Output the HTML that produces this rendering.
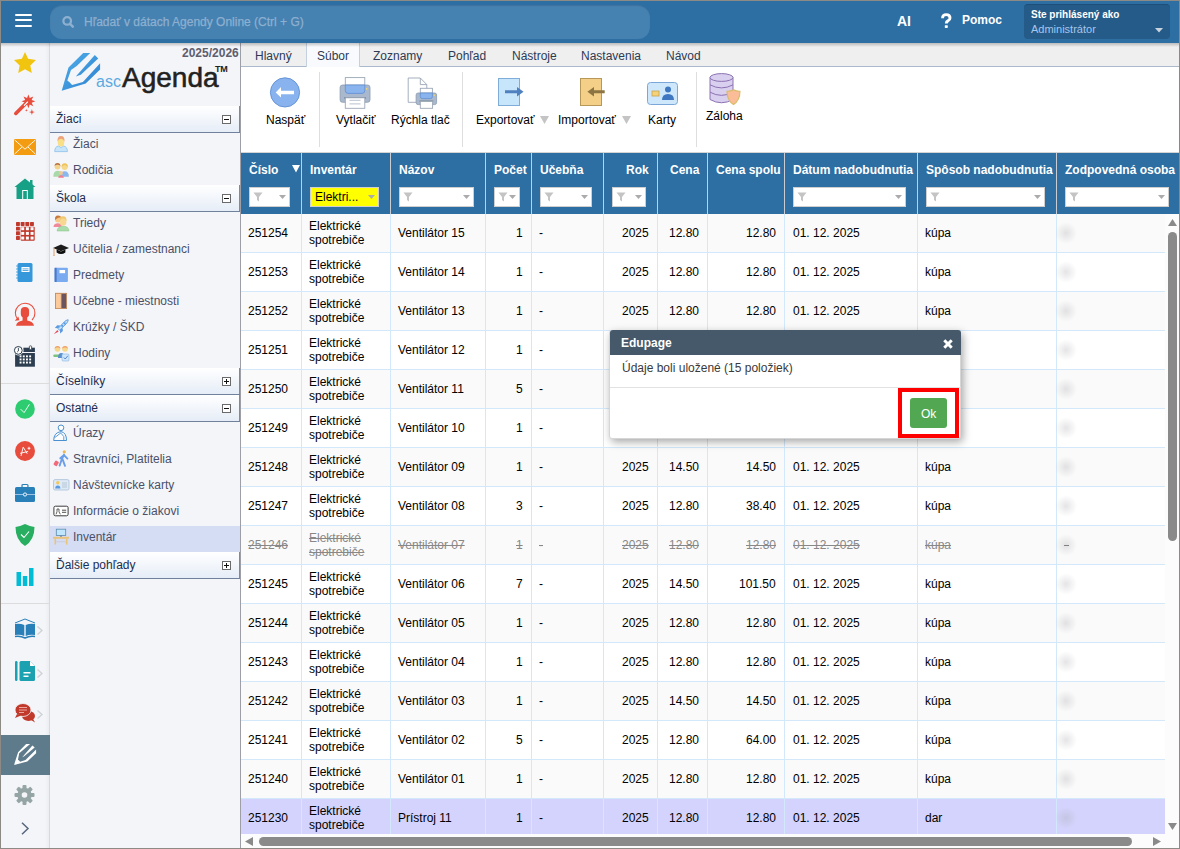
<!DOCTYPE html><html><head><meta charset="utf-8"><style>
*{box-sizing:border-box;margin:0;padding:0}
html,body{width:1180px;height:849px;overflow:hidden}
body{background:#8d8a86;font-family:"Liberation Sans",sans-serif;font-size:12px;color:#000;position:relative}
.a{position:absolute}
svg.a{overflow:visible}
.t{position:absolute;white-space:nowrap}
</style></head><body><div class="a" style="left:1px;top:1px;width:1178px;height:847px;background:#fff"></div>
<div class="a" style="left:1px;top:1px;width:1178px;height:42px;background:#2d6ea3"></div>
<div class="a" style="left:15px;top:14px;width:17px;height:2.1px;background:#fff;border-radius:1px"></div>
<div class="a" style="left:15px;top:19.4px;width:17px;height:2.1px;background:#fff;border-radius:1px"></div>
<div class="a" style="left:15px;top:24.8px;width:17px;height:2.1px;background:#fff;border-radius:1px"></div>
<div class="a" style="left:50px;top:5px;width:600px;height:34px;background:#4581b1;border-radius:12px;box-shadow:inset 0 1px 1px rgba(0,0,0,.12)"></div>
<svg class="a" style="left:62px;top:16px" width="14" height="14" viewBox="0 0 14 14"><circle cx="5.2" cy="4.9" r="3.8" fill="none" stroke="#8db0d0" stroke-width="2.3"/><path d="M8 7.8 L10.8 10.6" stroke="#8db0d0" stroke-width="2.5" stroke-linecap="round"/></svg>
<div class="t" style="left:84px;top:16px;font:12px/1 'Liberation Sans',sans-serif;color:#8db0d0;-webkit-text-stroke:0.25px #8db0d0">Hľadať v dátach Agendy Online (Ctrl + G)</div>
<div class="t" style="left:897px;top:14px;font:bold 14px/1 'Liberation Sans',sans-serif;color:#fff;">AI</div>
<svg class="a" style="left:940px;top:13px" width="13" height="16" viewBox="0 0 13 16"><path d="M2.6 5.2 Q2.5 1.6 6.2 1.6 Q10 1.6 10 4.9 Q10 6.8 7.9 7.9 Q6.3 8.7 6.3 10.6" fill="none" stroke="#fff" stroke-width="2.9"/><rect x="4.8" y="12.2" width="3" height="2.7" rx="0.6" fill="#fff"/></svg>
<div class="t" style="left:962px;top:14px;font:bold 12px/1 'Liberation Sans',sans-serif;color:#fff;">Pomoc</div>
<div class="a" style="left:1024px;top:4px;width:146px;height:35px;background:#255b88;border-radius:4px;border-top:1px solid #1f4f78"></div>
<div class="t" style="left:1031px;top:10px;font:bold 10px/1 'Liberation Sans',sans-serif;color:#fff;">Ste prihlásený ako</div>
<div class="t" style="left:1031px;top:24px;font:11px/1 'Liberation Sans',sans-serif;color:#a6c6ec;">Administrátor</div>
<svg class="a" style="left:1155px;top:28px" width="8" height="5" viewBox="0 0 8 5"><path d="M0 0 L8 0 L4 4.5 Z" fill="#c9d3dd"/></svg>
<div class="a" style="left:1px;top:43px;width:48px;height:805px;background:#f4f5f8"></div>
<div class="a" style="left:45px;top:43px;width:4px;height:805px;background:linear-gradient(90deg,rgba(0,0,0,0),rgba(0,0,0,.035))"></div>
<div class="a" style="left:49px;top:43px;width:1px;height:805px;background:#d9dadf"></div>
<div class="a" style="left:50px;top:43px;width:190px;height:805px;background:#f4f5f8"></div>
<div class="a" style="left:240px;top:43px;width:1px;height:805px;background:#9d9ea6"></div>
<svg class="a" style="left:10px;top:48px" width="30" height="30" viewBox="0 0 30 30"><path d="M15 4.1 L18.1 10.7 L26 11.9 L20.3 17.4 L21.8 24.9 L15 21.2 L8.2 24.9 L9.7 17.4 L4 11.9 L11.9 10.7 Z" fill="#f1c40f"/></svg>
<svg class="a" style="left:10px;top:90px" width="30" height="30" viewBox="0 0 30 30"><path d="M5.8 23.4 L16.5 12.7" stroke="#e74c3c" stroke-width="3.6" stroke-linecap="round"/><path d="M18.40 4.40 L19.74 8.07 L23.28 6.42 L21.63 9.96 L25.30 11.30 L21.63 12.64 L23.28 16.18 L19.74 14.53 L18.40 18.20 L17.06 14.53 L13.52 16.18 L15.17 12.64 L11.50 11.30 L15.17 9.96 L13.52 6.42 L17.06 8.07Z" fill="#e74c3c"/><path d="M14.3 15.3 L17.6 12" stroke="#fff" stroke-width="1.1" stroke-linecap="round"/><path d="M16.40 18.80 L16.75 19.95 L17.90 20.30 L16.75 20.65 L16.40 21.80 L16.05 20.65 L14.90 20.30 L16.05 19.95Z" fill="#e74c3c"/><path d="M21.90 19.10 L22.61 21.39 L24.90 22.10 L22.61 22.81 L21.90 25.10 L21.19 22.81 L18.90 22.10 L21.19 21.39Z" fill="#e74c3c"/></svg>
<svg class="a" style="left:14px;top:139px" width="22" height="16" viewBox="0 0 22 16"><rect x="0" y="0" width="22" height="16" fill="#f39c12"/><path d="M0.5 0.8 L11 10.2 L21.5 0.8" fill="none" stroke="#fff" stroke-width="0.9"/><path d="M0.5 15.2 L8 8 M21.5 15.2 L14 8" stroke="#fff" stroke-width="0.9"/></svg>
<svg class="a" style="left:14px;top:178px" width="22" height="21" viewBox="0 0 22 21"><path d="M11 0.5 L21.5 9 L19.5 9 L19.5 21 L2.5 21 L2.5 9 L0.5 9 Z" fill="#16a085"/><rect x="16" y="2" width="2.5" height="5" fill="#16a085"/><rect x="8.2" y="12" width="5.6" height="9" fill="#fff"/><rect x="9.2" y="13" width="3.6" height="8" fill="#16a085"/></svg>
<svg class="a" style="left:16px;top:222px" width="19" height="19" viewBox="0 0 19 19"><rect x="4.7" y="4.7" width="14" height="14" rx="0.8" fill="#c0392b"/><rect x="0.00" y="0.00" width="3.9" height="3.9" rx="0.6" fill="#c0392b"/><rect x="4.67" y="0.00" width="3.9" height="3.9" rx="0.6" fill="#c0392b"/><rect x="9.34" y="0.00" width="3.9" height="3.9" rx="0.6" fill="#c0392b"/><rect x="14.01" y="0.00" width="3.9" height="3.9" rx="0.6" fill="#c0392b"/><rect x="0.00" y="4.67" width="3.9" height="3.9" rx="0.6" fill="#c0392b"/><rect x="5.22" y="5.22" width="3.0" height="3.0" fill="#fff"/><rect x="9.89" y="5.22" width="3.0" height="3.0" fill="#fff"/><rect x="14.56" y="5.22" width="3.0" height="3.0" fill="#fff"/><rect x="0.00" y="9.34" width="3.9" height="3.9" rx="0.6" fill="#c0392b"/><rect x="5.22" y="9.89" width="3.0" height="3.0" fill="#fff"/><rect x="9.89" y="9.89" width="3.0" height="3.0" fill="#fff"/><rect x="14.56" y="9.89" width="3.0" height="3.0" fill="#fff"/><rect x="0.00" y="14.01" width="3.9" height="3.9" rx="0.6" fill="#c0392b"/><rect x="5.22" y="14.56" width="3.0" height="3.0" fill="#fff"/><rect x="9.89" y="14.56" width="3.0" height="3.0" fill="#fff"/><rect x="14.56" y="14.56" width="3.0" height="3.0" fill="#fff"/></svg>
<svg class="a" style="left:16px;top:263px" width="17" height="19" viewBox="0 0 17 19"><rect x="1.5" y="0" width="15" height="19" rx="1.5" fill="#3498db"/><rect x="5.5" y="4" width="8" height="5" fill="#fff"/><rect x="6.5" y="5.5" width="6" height="0.8" fill="#3498db"/><rect x="6.5" y="7" width="6" height="0.8" fill="#3498db"/><path d="M0 3h2.5M0 6h2.5M0 9h2.5M0 12h2.5M0 15h2.5" stroke="#3498db" stroke-width="0.8"/></svg>
<svg class="a" style="left:10px;top:300px" width="30" height="30" viewBox="0 0 30 30"><path d="M22 20 A9.8 9.8 0 1 0 7.9 19.6" fill="none" stroke="#e74c3c" stroke-width="1.1"/><path d="M4.8 20.7 L9.4 20.3 L8.3 16.4 Z" fill="#e74c3c"/><rect x="10.8" y="7" width="8.3" height="10.8" rx="4" fill="#e74c3c"/><rect x="12.6" y="15" width="4.6" height="6" fill="#e74c3c"/><path d="M6 25.8 Q6.8 21.2 12.6 20.4 L17.2 20.4 Q23.2 21.2 24 25.8 Z" fill="#e74c3c"/></svg>
<svg class="a" style="left:10px;top:342px" width="30" height="30" viewBox="0 0 30 30"><rect x="5.1" y="11" width="19.8" height="13.7" fill="#2c3e50"/><rect x="13.4" y="5.7" width="11.5" height="4.3" fill="#2c3e50"/><rect x="19.4" y="3.9" width="2.2" height="3.8" rx="0.6" fill="#fff" stroke="#2c3e50" stroke-width="0.8"/><rect x="9.6" y="13.4" width="1.9" height="1.9" fill="#fff"/><rect x="12.8" y="13.4" width="1.9" height="1.9" fill="#fff"/><rect x="16.0" y="13.4" width="1.9" height="1.9" fill="#fff"/><rect x="19.2" y="13.4" width="1.9" height="1.9" fill="#fff"/><rect x="9.6" y="16.5" width="1.9" height="1.9" fill="#fff"/><rect x="12.8" y="16.5" width="1.9" height="1.9" fill="#fff"/><rect x="16.0" y="16.5" width="1.9" height="1.9" fill="#fff"/><rect x="19.2" y="16.5" width="1.9" height="1.9" fill="#fff"/><rect x="9.6" y="19.6" width="1.9" height="1.9" fill="#fff"/><rect x="12.8" y="19.6" width="1.9" height="1.9" fill="#fff"/><rect x="16.0" y="19.6" width="1.9" height="1.9" fill="#fff"/><rect x="19.2" y="19.6" width="1.9" height="1.9" fill="#fff"/><circle cx="8.3" cy="8.4" r="5" fill="#f4f5f8"/><circle cx="8.3" cy="8.4" r="3.9" fill="#fff" stroke="#2c3e50" stroke-width="1"/><path d="M8.4 5.8 V9 L7.2 10" fill="none" stroke="#2c3e50" stroke-width="0.9"/></svg>
<div class="a" style="left:1px;top:383px;width:48px;height:1px;background:#dcdcdc"></div>
<svg class="a" style="left:15px;top:399px" width="20" height="20" viewBox="0 0 20 20"><circle cx="10" cy="10" r="9.8" fill="#2ecc71"/><path d="M5.6 10.1 L9.1 13.6 L14.4 5.3" fill="none" stroke="#fff" stroke-width="0.9"/></svg>
<svg class="a" style="left:15px;top:441px" width="20" height="20" viewBox="0 0 20 20"><circle cx="10" cy="10" r="10" fill="#e74c3c"/><path d="M6 15 L8.2 6.1 L12.2 12.7 M5.1 12.3 L13.1 10.5 M12.6 7.3 L15.4 7.3 M14 5.8 L14 8.8" fill="none" stroke="#fff" stroke-width="0.9"/></svg>
<svg class="a" style="left:15px;top:484px" width="20" height="18" viewBox="0 0 20 18"><rect x="0" y="3" width="20" height="15" rx="1.5" fill="#2980b9"/><rect x="7" y="0.5" width="6" height="3" rx="1" fill="none" stroke="#2980b9" stroke-width="1.2"/><rect x="0" y="10" width="20" height="1" fill="#9cc3e3"/><circle cx="10" cy="10.5" r="1.6" fill="#2980b9" stroke="#fff" stroke-width="0.9"/></svg>
<svg class="a" style="left:15px;top:524px" width="20" height="22" viewBox="0 0 20 22"><path d="M10 0 Q15 2.5 19.5 3 Q19.5 16 10 22 Q0.5 16 0.5 3 Q5 2.5 10 0Z" fill="#27ae60"/><path d="M6 10.5 L9 13.5 L14 7.5" fill="none" stroke="#fff" stroke-width="1.1"/></svg>
<svg class="a" style="left:16px;top:568px" width="18" height="18" viewBox="0 0 18 18"><rect x="0.5" y="4" width="4.5" height="14" fill="#00bcd4"/><rect x="6.8" y="8" width="4.5" height="10" fill="#00bcd4"/><rect x="13" y="0" width="4.5" height="18" fill="#00bcd4"/></svg>
<div class="a" style="left:1px;top:603px;width:48px;height:1px;background:#dcdcdc"></div>
<svg class="a" style="left:14px;top:619px" width="22" height="20" viewBox="0 0 22 20"><path d="M1 4 L11 0 L21 4" fill="none" stroke="#2980b9" stroke-width="1"/><path d="M1 5 Q6 4 10.3 6 V17 Q6 15 1 16Z M11.7 6 Q16 4 21 5 V16 Q16 15 11.7 17Z" fill="#2980b9"/><path d="M1 17.5 Q6 16.5 11 19 Q16 16.5 21 17.5" fill="none" stroke="#2980b9" stroke-width="1.5"/></svg>
<svg class="a" style="left:15px;top:661px" width="20" height="20" viewBox="0 0 20 20"><rect x="0" y="0" width="2.5" height="20" rx="1.2" fill="#1ba1b0"/><path d="M4.5 1.5 Q4.5 0 6 0 L15 0 L20 5 L20 18.5 Q20 20 18.5 20 L6 20 Q4.5 20 4.5 18.5Z" fill="#1ba1b0"/><path d="M15 0 L15 5 L20 5Z" fill="#fff"/><rect x="8.5" y="11" width="7" height="1.5" fill="#fff"/><rect x="8.5" y="14.5" width="5" height="1.5" fill="#fff"/></svg>
<svg class="a" style="left:15px;top:703px" width="21" height="20" viewBox="0 0 21 20"><ellipse cx="13.5" cy="13" rx="6.5" ry="5" fill="#c0392b"/><path d="M16 17 L20 19.5 L17 14Z" fill="#c0392b"/><ellipse cx="8" cy="7" rx="8" ry="6.5" fill="#c0392b" stroke="#f4f5f8" stroke-width="0.8"/><path d="M2 11 L0 15 L6 12.5Z" fill="#c0392b"/><rect x="4" y="4" width="8" height="1" fill="#e9a59f"/><rect x="4" y="6.5" width="8" height="1" fill="#e9a59f"/><rect x="4" y="9" width="5" height="1" fill="#e9a59f"/></svg>
<svg class="a" style="left:37px;top:626px" width="6" height="9" viewBox="0 0 6 9"><path d="M0.5 0.5 L5 4.5 L0.5 8.5" fill="none" stroke="#cfd1d4" stroke-width="1.3"/></svg>
<svg class="a" style="left:37px;top:669px" width="6" height="9" viewBox="0 0 6 9"><path d="M0.5 0.5 L5 4.5 L0.5 8.5" fill="none" stroke="#cfd1d4" stroke-width="1.3"/></svg>
<svg class="a" style="left:37px;top:710px" width="6" height="9" viewBox="0 0 6 9"><path d="M0.5 0.5 L5 4.5 L0.5 8.5" fill="none" stroke="#cfd1d4" stroke-width="1.3"/></svg>
<div class="a" style="left:1px;top:735px;width:49px;height:40px;background:#5d7b8b"></div>
<svg class="a" style="left:10px;top:740px" width="30" height="30" viewBox="0 0 30 30"><path d="M4.06 24.9 L8.1 12.2 L16.1 4.06 L20.1 4.06 L12.5 10.6 L9.2 13.25 L7.95 19.8 Q9 20.5 10.2 21.7 L15.5 20 L26.1 9.4 L26.1 13.25 L17.3 21.55 Z" fill="#fff"/><path d="M12.2 17.3 L22.4 5.4 L24.7 7.4 L14.2 16.2 Z" fill="#fff"/></svg>
<svg class="a" style="left:14px;top:785px" width="21" height="20" viewBox="0 0 21 20"><g transform="translate(10.5 10)" fill="#95a5a6"><rect x="-2" y="-10" width="4" height="5" rx="1" transform="rotate(0)"/><rect x="-2" y="-10" width="4" height="5" rx="1" transform="rotate(45)"/><rect x="-2" y="-10" width="4" height="5" rx="1" transform="rotate(90)"/><rect x="-2" y="-10" width="4" height="5" rx="1" transform="rotate(135)"/><rect x="-2" y="-10" width="4" height="5" rx="1" transform="rotate(180)"/><rect x="-2" y="-10" width="4" height="5" rx="1" transform="rotate(225)"/><rect x="-2" y="-10" width="4" height="5" rx="1" transform="rotate(270)"/><rect x="-2" y="-10" width="4" height="5" rx="1" transform="rotate(315)"/><circle r="7.2"/><circle r="2.8" fill="#f4f5f8"/></g></svg>
<svg class="a" style="left:21px;top:822px" width="8" height="13" viewBox="0 0 8 13"><path d="M1 0.8 L7 6.5 L1 12.2" fill="none" stroke="#56677e" stroke-width="1.5"/></svg>
<svg class="a" style="left:58px;top:48px" width="46" height="46" viewBox="0 0 46 46"><defs><linearGradient id="pg" x1="0" y1="0" x2="1" y2="1"><stop offset="0" stop-color="#52b0ea"/><stop offset="1" stop-color="#2b7fcf"/></linearGradient></defs><path d="M3.7 42.7 L10.5 19.5 L25.2 5.1 L32.2 5.1 L18.7 18.1 L13 22 L9.3 32.5 Q11.5 33.5 14.1 37 L24.9 33.9 L42.1 15.3 L42.1 21.5 L27.7 35.6 Z" fill="url(#pg)"/><path d="M17.8 28.6 L36.8 7 L40.2 10.6 L22.8 26.8 Z" fill="url(#pg)"/></svg>
<div class="t" style="left:96px;top:74px;font:16px/1 'Liberation Sans',sans-serif;color:#5aaae2;">asc</div>
<div class="t" style="left:122px;top:64px;font:28px/1 'Liberation Sans',sans-serif;color:#222;-webkit-text-stroke:0.55px #222">Agenda</div>
<div class="t" style="left:215px;top:65px;font:bold 10px/1 'Liberation Sans',sans-serif;color:#222;font-size:9px;"><span style="letter-spacing:-0.3px">TM</span></div>
<div class="t" style="left:182px;top:47px;font:bold 12px/1 'Liberation Sans',sans-serif;color:#5e5e6e;">2025/2026</div>
<div class="a" style="left:50px;top:106px;width:190px;height:26px;background:linear-gradient(#ffffff,#e6edf7);border-right:1px solid #7d8ba0"></div>
<div class="a" style="left:50px;top:132px;width:190px;height:1px;background:#6f819c"></div>
<div class="t" style="left:56px;top:113px;font:12px/1 'Liberation Sans',sans-serif;color:#1d2d4f;">Žiaci</div>
<div class="a" style="left:222px;top:115px;width:9px;height:9px;border:1px solid #6a6a6a;background:#fff"></div>
<div class="a" style="left:224px;top:119px;width:5px;height:1px;background:#111"></div>
<div class="t" style="left:73px;top:138px;font:12px/1 'Liberation Sans',sans-serif;color:#4a5068;">Žiaci</div>
<svg class="a" style="left:53px;top:135px" width="17" height="18" viewBox="0 0 17 18"><path d="M1.7 16.6 Q1.7 11.6 5.6 11 L8 12.6 L10.5 11 Q14.4 11.6 14.4 16.6 Z" fill="#c6e4fa" stroke="#8cbfe8" stroke-width="0.8"/><ellipse cx="8" cy="7" rx="3.3" ry="4.6" fill="#f9df86"/><path d="M4.6 6.5 Q4 1 8 1 Q12 1 11.4 6.5 Q10.6 3.8 8 3.8 Q5.4 3.8 4.6 6.5Z" fill="#eea37d"/></svg>
<div class="t" style="left:73px;top:164px;font:12px/1 'Liberation Sans',sans-serif;color:#4a5068;">Rodičia</div>
<svg class="a" style="left:53px;top:161px" width="17" height="18" viewBox="0 0 17 18"><path d="M0.3 15.8 Q0.3 9.8 4.5 9.8 Q8.3 9.8 8.5 12.5 L8.5 15.8Z" fill="#a9d9a9"/><circle cx="4.5" cy="5.6" r="2.9" fill="#f3d48a"/><path d="M1.6 5 Q1.6 2 4.5 2 Q7.4 2 7.4 5 Q6 3.6 4.5 3.8 Q3 3.6 1.6 5Z" fill="#b9723f"/><path d="M7.5 15.8 Q7.5 10.3 11.7 10.3 Q15.9 10.3 15.9 15.8Z" fill="#8ab8ee"/><circle cx="11.7" cy="6" r="3" fill="#f5d88a"/><path d="M8.5 6.5 Q8.3 2.2 11.7 2.2 Q15.1 2.2 14.9 6.5 Q13.5 4 11.7 4 Q9.9 4 8.5 6.5Z" fill="#eec35f"/><circle cx="8" cy="12" r="1.9" fill="#f5c890"/><path d="M5.2 16.8 Q5.2 14.2 8 14.2 Q10.8 14.2 10.8 16.8Z" fill="#f07f8f"/></svg>
<div class="a" style="left:50px;top:185px;width:190px;height:26px;background:linear-gradient(#ffffff,#e6edf7);border-right:1px solid #7d8ba0"></div>
<div class="a" style="left:50px;top:211px;width:190px;height:1px;background:#6f819c"></div>
<div class="t" style="left:56px;top:192px;font:12px/1 'Liberation Sans',sans-serif;color:#1d2d4f;">Škola</div>
<div class="a" style="left:222px;top:194px;width:9px;height:9px;border:1px solid #6a6a6a;background:#fff"></div>
<div class="a" style="left:224px;top:198px;width:5px;height:1px;background:#111"></div>
<div class="t" style="left:73px;top:217px;font:12px/1 'Liberation Sans',sans-serif;color:#4a5068;">Triedy</div>
<svg class="a" style="left:53px;top:214px" width="17" height="18" viewBox="0 0 17 18"><path d="M0.5 13 Q0.5 9.2 5 9.2 Q8 9.2 9 11 L8 13Z" fill="#f08a9a"/><circle cx="5" cy="5.5" r="3" fill="#f5c98a"/><path d="M2 6 Q1.5 1.5 5 1.5 Q8 1.5 8.5 4 Q6 3 4 4.5 Q3 5 2 6Z" fill="#c8783a"/><path d="M4 17 Q4.5 12.2 10 12.2 Q15.8 12.2 16 17Z" fill="#a8dca8" stroke="#88c088" stroke-width="0.5"/><ellipse cx="10" cy="7.8" rx="3.4" ry="4" fill="#f8d890"/><path d="M6.5 7.5 Q6 2.3 10 2.3 Q14 2.3 13.5 7.5 Q12.5 4.5 10 4.5 Q7.5 4.5 6.5 7.5Z" fill="#f0c870"/></svg>
<div class="t" style="left:73px;top:243px;font:12px/1 'Liberation Sans',sans-serif;color:#4a5068;">Učitelia / zamestnanci</div>
<svg class="a" style="left:53px;top:240px" width="17" height="18" viewBox="0 0 17 18"><path d="M0 8 L8 4.4 L16 8 L8 11.3Z" fill="#1c1c1c"/><path d="M3.6 9.6 L3.6 12.6 Q8 15.6 12.4 12.6 L12.4 9.6 L8 11.6Z" fill="#0e0e0e"/><path d="M1 8.3 L1 14.5" stroke="#d9a070" stroke-width="1"/><circle cx="1" cy="15.2" r="0.9" fill="#e7b080"/></svg>
<div class="t" style="left:73px;top:269px;font:12px/1 'Liberation Sans',sans-serif;color:#4a5068;">Predmety</div>
<svg class="a" style="left:53px;top:266px" width="17" height="18" viewBox="0 0 17 18"><rect x="1.6" y="1.8" width="13.3" height="14.2" rx="1" fill="#7aabf0"/><rect x="1.6" y="1.8" width="2" height="14.2" fill="#4a78c8"/><rect x="6.5" y="4" width="5.6" height="3.2" fill="#fff"/></svg>
<div class="t" style="left:73px;top:295px;font:12px/1 'Liberation Sans',sans-serif;color:#4a5068;">Učebne - miestnosti</div>
<svg class="a" style="left:53px;top:292px" width="17" height="18" viewBox="0 0 17 18"><rect x="2.4" y="1.3" width="11.2" height="15.3" fill="#6b5560" stroke="#c48a5c" stroke-width="0.8"/><rect x="2.6" y="1.3" width="5.6" height="15.3" fill="#fbc99a" stroke="#c48a5c" stroke-width="0.7"/></svg>
<div class="t" style="left:73px;top:321px;font:12px/1 'Liberation Sans',sans-serif;color:#4a5068;">Krúžky / ŠKD</div>
<svg class="a" style="left:53px;top:318px" width="17" height="18" viewBox="0 0 17 18"><path d="M5 10.5 L12 3.2 Q14.3 1.6 15.2 1.8 Q15.4 2.8 13.8 5.2 L6.6 12.3Z" fill="#c2e2fb" stroke="#5a9ae0" stroke-width="0.9"/><circle cx="11.6" cy="5.4" r="1.1" fill="#5a9ae0"/><circle cx="9.2" cy="7.8" r="1.1" fill="#5a9ae0"/><path d="M5.2 10.2 L1.8 10 L4.2 7.2 L7.3 7.6Z" fill="#5a9ae0"/><path d="M6.9 12.1 L7.2 15.4 L9.9 13.1 L9.6 10Z" fill="#5a9ae0"/><path d="M4.3 12 L0.8 16.3 L5.6 13.6Z" fill="#e84a5a"/></svg>
<div class="t" style="left:73px;top:347px;font:12px/1 'Liberation Sans',sans-serif;color:#4a5068;">Hodiny</div>
<svg class="a" style="left:53px;top:344px" width="17" height="18" viewBox="0 0 17 18"><circle cx="4.5" cy="5" r="2.8" fill="#f6d88a"/><path d="M1.7 4.8 Q1.7 2 4.5 2 Q7.3 2 7.3 4.8 Q6 3.4 4.5 3.4 Q3 3.4 1.7 4.8Z" fill="#f0a070"/><circle cx="12" cy="5" r="2.8" fill="#f6d88a"/><path d="M9.2 4.8 Q9.2 2 12 2 Q14.8 2 14.8 4.8 Q13.5 3.4 12 3.4 Q10.5 3.4 9.2 4.8Z" fill="#f0a070"/><rect x="0.3" y="10.5" width="6" height="2.6" rx="1" fill="#7cc47c"/><path d="M5 14 Q5 9 8.3 9 Q11.5 9 11.5 14Z" fill="#5b8fd0"/><rect x="9" y="10" width="7" height="7" rx="1" fill="#cfe6fb" stroke="#8ab6e0" stroke-width="0.6"/><path d="M10.8 13.5 L12.2 15 L14.8 11.8" fill="none" stroke="#4a80c8" stroke-width="0.9"/></svg>
<div class="a" style="left:50px;top:368px;width:190px;height:26px;background:linear-gradient(#ffffff,#e6edf7);border-right:1px solid #7d8ba0"></div>
<div class="a" style="left:50px;top:394px;width:190px;height:1px;background:#6f819c"></div>
<div class="t" style="left:56px;top:375px;font:12px/1 'Liberation Sans',sans-serif;color:#1d2d4f;">Číselníky</div>
<div class="a" style="left:222px;top:377px;width:9px;height:9px;border:1px solid #6a6a6a;background:#fff"></div>
<div class="a" style="left:224px;top:381px;width:5px;height:1px;background:#111"></div>
<div class="a" style="left:226px;top:379px;width:1px;height:5px;background:#111"></div>
<div class="a" style="left:50px;top:395px;width:190px;height:26px;background:linear-gradient(#ffffff,#e6edf7);border-right:1px solid #7d8ba0"></div>
<div class="a" style="left:50px;top:421px;width:190px;height:1px;background:#6f819c"></div>
<div class="t" style="left:56px;top:402px;font:12px/1 'Liberation Sans',sans-serif;color:#1d2d4f;">Ostatné</div>
<div class="a" style="left:222px;top:404px;width:9px;height:9px;border:1px solid #6a6a6a;background:#fff"></div>
<div class="a" style="left:224px;top:408px;width:5px;height:1px;background:#111"></div>
<div class="t" style="left:73px;top:427px;font:12px/1 'Liberation Sans',sans-serif;color:#4a5068;">Úrazy</div>
<svg class="a" style="left:53px;top:424px" width="17" height="18" viewBox="0 0 17 18"><circle cx="8" cy="3.8" r="2.8" fill="#fff" stroke="#4a90d0" stroke-width="1"/><path d="M0.7 16.5 Q0.7 8.6 8 7.6 Q13.5 8.6 13.5 16.5 Z" fill="#fff" stroke="#4a90d0" stroke-width="1"/><path d="M1.5 13.8 L8.2 8.6 M8 9.2 L10.8 12.6 L10.8 16.4" fill="none" stroke="#4a90d0" stroke-width="0.9"/></svg>
<div class="t" style="left:73px;top:453px;font:12px/1 'Liberation Sans',sans-serif;color:#4a5068;">Stravníci, Platitelia</div>
<svg class="a" style="left:53px;top:450px" width="17" height="18" viewBox="0 0 17 18"><circle cx="11.3" cy="1.8" r="1.6" fill="#f0b850"/><path d="M11 4.6 L8.5 10 L6.6 15.6 M9.6 9.4 L12 15.8 M10.2 5.6 L7.3 8.3 M11 5.2 L14.4 8.6" fill="none" stroke="#6a9ee8" stroke-width="1.9" stroke-linecap="round"/><rect x="1.2" y="10.8" width="4" height="5" rx="1" transform="rotate(30 3.2 13.3)" fill="#f06a7a"/></svg>
<div class="t" style="left:73px;top:479px;font:12px/1 'Liberation Sans',sans-serif;color:#4a5068;">Návštevnícke karty</div>
<svg class="a" style="left:53px;top:476px" width="17" height="18" viewBox="0 0 17 18"><rect x="0.5" y="3.6" width="15.5" height="10.4" rx="1.5" fill="#dde9f6" stroke="#a9bfd9" stroke-width="0.8"/><circle cx="4.8" cy="6.8" r="1.7" fill="#f3c85a"/><path d="M2.2 12.6 Q2.2 9.4 4.8 9.4 Q7.4 9.4 7.4 12.6Z" fill="#5a9ae0"/><path d="M9 7h5M9 9h5M9 11h5" stroke="#b3c3d3" stroke-width="0.9"/></svg>
<div class="t" style="left:73px;top:505px;font:12px/1 'Liberation Sans',sans-serif;color:#4a5068;">Informácie o žiakovi</div>
<svg class="a" style="left:53px;top:502px" width="17" height="18" viewBox="0 0 17 18"><rect x="0.9" y="4.2" width="14.2" height="9.6" rx="1.5" fill="#fff" stroke="#3a3a3a" stroke-width="1"/><path d="M3 12.3 Q3.6 11 4 9.6 L4 7 L6 7 L6 9.6 Q6.4 11 7.4 12.3" fill="none" stroke="#3a3a3a" stroke-width="0.8"/><path d="M9 8.2h4.2M9 10.3h4.2" stroke="#3a3a3a" stroke-width="0.9"/></svg>
<div class="a" style="left:50px;top:526px;width:190px;height:26px;background:#d5ddf5"></div>
<div class="t" style="left:73px;top:531px;font:12px/1 'Liberation Sans',sans-serif;color:#4a5068;">Inventár</div>
<svg class="a" style="left:53px;top:528px" width="17" height="18" viewBox="0 0 17 18"><rect x="3.3" y="1.2" width="9.4" height="6.3" fill="#bfe6fb" stroke="#5a8ab0" stroke-width="0.8"/><rect x="7" y="7.5" width="2" height="1.3" fill="#6a8aa0"/><rect x="0" y="8.8" width="16" height="2" fill="#e9c37a"/><rect x="1.5" y="10.8" width="1.6" height="5.8" fill="#e9c37a"/><rect x="12.9" y="10.8" width="1.6" height="5.8" fill="#e9c37a"/><rect x="3.1" y="13.4" width="9.8" height="0.8" fill="#c9c9d0"/></svg>
<div class="a" style="left:50px;top:552px;width:190px;height:26px;background:linear-gradient(#ffffff,#e6edf7);border-right:1px solid #7d8ba0"></div>
<div class="a" style="left:50px;top:578px;width:190px;height:1px;background:#6f819c"></div>
<div class="t" style="left:56px;top:559px;font:12px/1 'Liberation Sans',sans-serif;color:#1d2d4f;">Ďalšie pohľady</div>
<div class="a" style="left:222px;top:561px;width:9px;height:9px;border:1px solid #6a6a6a;background:#fff"></div>
<div class="a" style="left:224px;top:565px;width:5px;height:1px;background:#111"></div>
<div class="a" style="left:226px;top:563px;width:1px;height:5px;background:#111"></div>
<div class="a" style="left:241px;top:43px;width:938px;height:23px;background:#efefef"></div>
<div class="a" style="left:241px;top:66px;width:938px;height:1px;background:#abb9cc"></div>
<div class="a" style="left:306px;top:43px;width:54px;height:24px;background:#f8fafd;border:1px solid #c5d0de;border-top:none;border-bottom:none"></div>
<div class="t" style="left:255px;top:50px;font:12px/1 'Liberation Sans',sans-serif;color:#2d3a55;">Hlavný</div>
<div class="t" style="left:317px;top:50px;font:12px/1 'Liberation Sans',sans-serif;color:#2d3a55;">Súbor</div>
<div class="t" style="left:373px;top:50px;font:12px/1 'Liberation Sans',sans-serif;color:#2d3a55;">Zoznamy</div>
<div class="t" style="left:448px;top:50px;font:12px/1 'Liberation Sans',sans-serif;color:#2d3a55;">Pohľad</div>
<div class="t" style="left:512px;top:50px;font:12px/1 'Liberation Sans',sans-serif;color:#2d3a55;">Nástroje</div>
<div class="t" style="left:581px;top:50px;font:12px/1 'Liberation Sans',sans-serif;color:#2d3a55;">Nastavenia</div>
<div class="t" style="left:666px;top:50px;font:12px/1 'Liberation Sans',sans-serif;color:#2d3a55;">Návod</div>
<div class="a" style="left:241px;top:67px;width:938px;height:86px;background:#fff"></div>
<div class="a" style="left:319px;top:72px;width:1px;height:75px;background:#dedede"></div>
<div class="a" style="left:462px;top:72px;width:1px;height:75px;background:#dedede"></div>
<div class="a" style="left:696px;top:72px;width:1px;height:75px;background:#dedede"></div>
<svg class="a" style="left:270px;top:77px" width="31" height="31" viewBox="0 0 31 31"><circle cx="15" cy="15.4" r="14.6" fill="#89b3ee" stroke="#5f8fd2" stroke-width="0.9"/><path d="M5.7 15.4 L11 10.1 L11 13.7 L24 13.7 L24 17.2 L11 17.2 L11 20.6Z" fill="#fff"/></svg>
<div class="t" style="left:266px;top:114px;font:12px/1 'Liberation Sans',sans-serif;color:#000;">Naspäť</div>
<svg class="a" style="left:335px;top:72px" width="110" height="40" viewBox="0 0 110 40"><rect x="10.3" y="5.6" width="19.5" height="9" fill="#fff" stroke="#9aa6b6" stroke-width="0.9"/><rect x="5.1" y="13" width="29.9" height="17.3" rx="2.5" fill="#a9b8cc" stroke="#8c9ab0" stroke-width="0.8"/><path d="M10.3 13 L29.8 13 L29.8 18.5 Q29.8 21.4 27 21.4 L13 21.4 Q10.3 21.4 10.3 18.5 Z" fill="#8ab4ee" stroke="#5f8fd2" stroke-width="0.8"/><rect x="9.3" y="25.2" width="21.5" height="1.4" fill="#6a7a90"/><rect x="10.3" y="25.8" width="19.5" height="10.5" fill="#fff" stroke="#9aa6b6" stroke-width="0.9"/><path d="M14.5 28.3h11 M14.5 31.9h11" stroke="#b0bac8" stroke-width="0.9"/><circle cx="31.7" cy="16.8" r="0.9" fill="#f5d76e"/><path d="M73.2 6 L85.3 6 L91.8 12.6 L91.8 30.3 L73.2 30.3 Z" fill="#fff" stroke="#9aa6b6" stroke-width="0.9"/><path d="M85.3 6 L85.3 12.6 L91.8 12.6" fill="none" stroke="#9aa6b6" stroke-width="0.9"/><rect x="85.3" y="16.3" width="12.1" height="5.1" fill="#fff" stroke="#9aa6b6" stroke-width="0.9"/><rect x="81.1" y="21" width="20.5" height="11.6" rx="2" fill="#a9b8cc" stroke="#8c9ab0" stroke-width="0.8"/><path d="M85.3 21 h12.1 v3.6 q0 2 -2 2 h-8.1 q-2 0 -2 -2 Z" fill="#8ab4ee" stroke="#5f8fd2" stroke-width="0.8"/><rect x="84.5" y="28.6" width="13.7" height="1" fill="#6a7a90"/><rect x="85.3" y="29.4" width="12.3" height="6.9" fill="#fff" stroke="#9aa6b6" stroke-width="0.9"/><circle cx="99.3" cy="23.3" r="0.8" fill="#f5d76e"/></svg>
<div class="t" style="left:336px;top:114px;font:12px/1 'Liberation Sans',sans-serif;color:#000;">Vytlačiť</div>
<div class="t" style="left:391px;top:114px;font:12px/1 'Liberation Sans',sans-serif;color:#000;">Rýchla tlač</div>
<svg class="a" style="left:498px;top:78px" width="27" height="28" viewBox="0 0 27 28"><rect x="0.5" y="0.5" width="21" height="27" fill="#c8e6fb" stroke="#80acd8" stroke-width="1"/><path d="M7 12.3 L19 12.3 L19 9 L25.5 13.8 L19 18.6 L19 15.3 L7 15.3Z" fill="#4f80bf"/></svg>
<div class="t" style="left:476px;top:114px;font:12px/1 'Liberation Sans',sans-serif;color:#000;">Exportovať</div>
<svg class="a" style="left:540px;top:116px" width="9" height="8" viewBox="0 0 9 8"><path d="M0 0 L9 0 L4.5 8Z" fill="#c4c4c4"/></svg>
<svg class="a" style="left:580px;top:78px" width="25" height="28" viewBox="0 0 25 28"><rect x="0.5" y="0.5" width="21" height="27" fill="#f3cf88" stroke="#b89858" stroke-width="1"/><path d="M24.7 12.3 L14 12.3 L14 9 L7.4 13.8 L14 18.6 L14 15.3 L24.7 15.3Z" fill="#8c7443"/></svg>
<div class="t" style="left:558px;top:114px;font:12px/1 'Liberation Sans',sans-serif;color:#000;">Importovať</div>
<svg class="a" style="left:622px;top:116px" width="9" height="8" viewBox="0 0 9 8"><path d="M0 0 L9 0 L4.5 8Z" fill="#c4c4c4"/></svg>
<svg class="a" style="left:647px;top:82px" width="31" height="23" viewBox="0 0 31 23"><rect x="0.5" y="0.5" width="30" height="22" rx="3" fill="#cfe7fb" stroke="#7aa7d8" stroke-width="1"/><rect x="5" y="9" width="7" height="5" fill="#f5d27a" stroke="#c9a24a" stroke-width="0.8"/><circle cx="21" cy="7.5" r="3" fill="#3f78c0"/><path d="M15 18 Q15 12 21 12 Q27 12 27 18Z" fill="#3f78c0"/></svg>
<div class="t" style="left:648px;top:114px;font:12px/1 'Liberation Sans',sans-serif;color:#000;">Karty</div>
<svg class="a" style="left:709px;top:73px" width="32" height="32" viewBox="0 0 32 32"><path d="M1 4.5 V26.5 Q12.5 33 24 26.5 V4.5" fill="#d9d0ef" stroke="#8c72b2" stroke-width="1"/><ellipse cx="12.5" cy="4.5" rx="11.5" ry="3.9" fill="#d9d0ef" stroke="#8c72b2" stroke-width="1"/><path d="M1 11.8 Q12.5 18 24 11.8 M1 19.2 Q12.5 25.5 24 19.2" fill="none" stroke="#8c72b2" stroke-width="1"/><path d="M24.5 16.8 Q27.5 18.5 31 18.3 Q31 27.5 24.5 31.5 Q18 27.5 18 18.3 Q21.5 18.5 24.5 16.8Z" fill="#fbbd98" stroke="#d9bb66" stroke-width="1.1"/></svg>
<div class="t" style="left:706px;top:110px;font:12px/1 'Liberation Sans',sans-serif;color:#000;">Záloha</div>
<div class="a" style="left:241px;top:152px;width:938px;height:1px;background:#d4d4d4"></div>
<div class="a" style="left:241px;top:153px;width:938px;height:61px;background:#2d6ea3"></div>
<div class="a" style="left:301px;top:153px;width:1px;height:61px;background:#c9cdd3"></div>
<div class="a" style="left:390px;top:153px;width:1px;height:61px;background:#c9cdd3"></div>
<div class="a" style="left:485px;top:153px;width:1px;height:61px;background:#c9cdd3"></div>
<div class="a" style="left:531px;top:153px;width:1px;height:61px;background:#c9cdd3"></div>
<div class="a" style="left:603px;top:153px;width:1px;height:61px;background:#c9cdd3"></div>
<div class="a" style="left:657px;top:153px;width:1px;height:61px;background:#c9cdd3"></div>
<div class="a" style="left:707px;top:153px;width:1px;height:61px;background:#c9cdd3"></div>
<div class="a" style="left:784px;top:153px;width:1px;height:61px;background:#c9cdd3"></div>
<div class="a" style="left:917px;top:153px;width:1px;height:61px;background:#c9cdd3"></div>
<div class="a" style="left:1056px;top:153px;width:1px;height:61px;background:#c9cdd3"></div>
<div class="t" style="left:249px;top:164px;font:bold 12px/1 'Liberation Sans',sans-serif;color:#fff;">Číslo</div>
<div class="t" style="left:310px;top:164px;font:bold 12px/1 'Liberation Sans',sans-serif;color:#fff;">Inventár</div>
<div class="t" style="left:399px;top:164px;font:bold 12px/1 'Liberation Sans',sans-serif;color:#fff;">Názov</div>
<div class="t" style="left:494px;top:164px;font:bold 12px/1 'Liberation Sans',sans-serif;color:#fff;">Počet</div>
<div class="t" style="left:540px;top:164px;font:bold 12px/1 'Liberation Sans',sans-serif;color:#fff;">Učebňa</div>
<div class="t" style="left:626px;top:164px;font:bold 12px/1 'Liberation Sans',sans-serif;color:#fff;">Rok</div>
<div class="t" style="left:670px;top:164px;font:bold 12px/1 'Liberation Sans',sans-serif;color:#fff;">Cena</div>
<div class="t" style="left:716px;top:164px;font:bold 12px/1 'Liberation Sans',sans-serif;color:#fff;">Cena spolu</div>
<div class="t" style="left:793px;top:164px;font:bold 12px/1 'Liberation Sans',sans-serif;color:#fff;">Dátum nadobudnutia</div>
<div class="t" style="left:926px;top:164px;font:bold 12px/1 'Liberation Sans',sans-serif;color:#fff;">Spôsob nadobudnutia</div>
<div class="t" style="left:1065px;top:164px;font:bold 12px/1 'Liberation Sans',sans-serif;color:#fff;">Zodpovedná osoba</div>
<svg class="a" style="left:292px;top:165px" width="8" height="8" viewBox="0 0 8 8"><path d="M0 0 L8 0 L4 7.5Z" fill="#fff"/></svg>
<div class="a" style="left:249px;top:187px;width:41px;height:20px;background:#fff;border:1px solid #cfcfcf"></div>
<svg class="a" style="left:253px;top:192px" width="10" height="10" viewBox="0 0 10 10"><path d="M0.5 0.5 L9.5 0.5 L6 5 L6 9.5 L4 8 L4 5Z" fill="#c4c4c4"/></svg>
<svg class="a" style="left:279px;top:195px" width="7" height="4" viewBox="0 0 7 4"><path d="M0 0 L7 0 L3.5 4Z" fill="#ababab"/></svg>
<div class="a" style="left:310px;top:187px;width:69px;height:20px;background:#ffff00;border:1px solid #cfcfcf"></div>
<svg class="a" style="left:368px;top:195px" width="7" height="4" viewBox="0 0 7 4"><path d="M0 0 L7 0 L3.5 4Z" fill="#ababab"/></svg>
<div class="a" style="left:399px;top:187px;width:75px;height:20px;background:#fff;border:1px solid #cfcfcf"></div>
<svg class="a" style="left:403px;top:192px" width="10" height="10" viewBox="0 0 10 10"><path d="M0.5 0.5 L9.5 0.5 L6 5 L6 9.5 L4 8 L4 5Z" fill="#c4c4c4"/></svg>
<svg class="a" style="left:463px;top:195px" width="7" height="4" viewBox="0 0 7 4"><path d="M0 0 L7 0 L3.5 4Z" fill="#ababab"/></svg>
<div class="a" style="left:494px;top:187px;width:26px;height:20px;background:#fff;border:1px solid #cfcfcf"></div>
<svg class="a" style="left:498px;top:192px" width="10" height="10" viewBox="0 0 10 10"><path d="M0.5 0.5 L9.5 0.5 L6 5 L6 9.5 L4 8 L4 5Z" fill="#c4c4c4"/></svg>
<svg class="a" style="left:509px;top:195px" width="7" height="4" viewBox="0 0 7 4"><path d="M0 0 L7 0 L3.5 4Z" fill="#ababab"/></svg>
<div class="a" style="left:540px;top:187px;width:52px;height:20px;background:#fff;border:1px solid #cfcfcf"></div>
<svg class="a" style="left:544px;top:192px" width="10" height="10" viewBox="0 0 10 10"><path d="M0.5 0.5 L9.5 0.5 L6 5 L6 9.5 L4 8 L4 5Z" fill="#c4c4c4"/></svg>
<svg class="a" style="left:581px;top:195px" width="7" height="4" viewBox="0 0 7 4"><path d="M0 0 L7 0 L3.5 4Z" fill="#ababab"/></svg>
<div class="a" style="left:612px;top:187px;width:34px;height:20px;background:#fff;border:1px solid #cfcfcf"></div>
<svg class="a" style="left:616px;top:192px" width="10" height="10" viewBox="0 0 10 10"><path d="M0.5 0.5 L9.5 0.5 L6 5 L6 9.5 L4 8 L4 5Z" fill="#c4c4c4"/></svg>
<svg class="a" style="left:635px;top:195px" width="7" height="4" viewBox="0 0 7 4"><path d="M0 0 L7 0 L3.5 4Z" fill="#ababab"/></svg>
<div class="a" style="left:793px;top:187px;width:113px;height:20px;background:#fff;border:1px solid #cfcfcf"></div>
<svg class="a" style="left:797px;top:192px" width="10" height="10" viewBox="0 0 10 10"><path d="M0.5 0.5 L9.5 0.5 L6 5 L6 9.5 L4 8 L4 5Z" fill="#c4c4c4"/></svg>
<svg class="a" style="left:895px;top:195px" width="7" height="4" viewBox="0 0 7 4"><path d="M0 0 L7 0 L3.5 4Z" fill="#ababab"/></svg>
<div class="a" style="left:926px;top:187px;width:119px;height:20px;background:#fff;border:1px solid #cfcfcf"></div>
<svg class="a" style="left:930px;top:192px" width="10" height="10" viewBox="0 0 10 10"><path d="M0.5 0.5 L9.5 0.5 L6 5 L6 9.5 L4 8 L4 5Z" fill="#c4c4c4"/></svg>
<svg class="a" style="left:1034px;top:195px" width="7" height="4" viewBox="0 0 7 4"><path d="M0 0 L7 0 L3.5 4Z" fill="#ababab"/></svg>
<div class="a" style="left:1065px;top:187px;width:104px;height:20px;background:#fff;border:1px solid #cfcfcf"></div>
<svg class="a" style="left:1069px;top:192px" width="10" height="10" viewBox="0 0 10 10"><path d="M0.5 0.5 L9.5 0.5 L6 5 L6 9.5 L4 8 L4 5Z" fill="#c4c4c4"/></svg>
<svg class="a" style="left:1158px;top:195px" width="7" height="4" viewBox="0 0 7 4"><path d="M0 0 L7 0 L3.5 4Z" fill="#ababab"/></svg>
<div class="t" style="left:315px;top:191px;font:12px/1 'Liberation Sans',sans-serif;color:#000;">Elektri...</div>
<div class="a" style="left:241px;top:214px;width:924px;height:38px;background:#fafafa"></div>
<div class="a" style="left:241px;top:252px;width:924px;height:1px;background:#d3e8fb"></div>
<div class="a" style="left:301px;top:214px;width:1px;height:39px;background:#d3e8fb"></div>
<div class="a" style="left:390px;top:214px;width:1px;height:39px;background:#d3e8fb"></div>
<div class="a" style="left:485px;top:214px;width:1px;height:39px;background:#d3e8fb"></div>
<div class="a" style="left:531px;top:214px;width:1px;height:39px;background:#d3e8fb"></div>
<div class="a" style="left:603px;top:214px;width:1px;height:39px;background:#d3e8fb"></div>
<div class="a" style="left:657px;top:214px;width:1px;height:39px;background:#d3e8fb"></div>
<div class="a" style="left:707px;top:214px;width:1px;height:39px;background:#d3e8fb"></div>
<div class="a" style="left:784px;top:214px;width:1px;height:39px;background:#d3e8fb"></div>
<div class="a" style="left:917px;top:214px;width:1px;height:39px;background:#d3e8fb"></div>
<div class="a" style="left:1056px;top:214px;width:1px;height:39px;background:#d3e8fb"></div>
<div class="t" style="left:248px;top:227px;font:12px/1 'Liberation Sans',sans-serif;color:#000;">251254</div>
<div class="t" style="left:309px;top:220px;font:12px/1 'Liberation Sans',sans-serif;color:#000;">Elektrické</div>
<div class="t" style="left:309px;top:234px;font:12px/1 'Liberation Sans',sans-serif;color:#000;">spotrebiče</div>
<div class="t" style="left:398px;top:227px;font:12px/1 'Liberation Sans',sans-serif;color:#000;">Ventilátor 15</div>
<div class="t" style="left:516px;top:227px;font:12px/1 'Liberation Sans',sans-serif;color:#000;">1</div>
<div class="t" style="left:539px;top:227px;font:12px/1 'Liberation Sans',sans-serif;color:#000;">-</div>
<div class="t" style="left:622px;top:227px;font:12px/1 'Liberation Sans',sans-serif;color:#000;">2025</div>
<div class="t" style="left:669px;top:227px;font:12px/1 'Liberation Sans',sans-serif;color:#000;">12.80</div>
<div class="t" style="left:746px;top:227px;font:12px/1 'Liberation Sans',sans-serif;color:#000;">12.80</div>
<div class="t" style="left:793px;top:227px;font:12px/1 'Liberation Sans',sans-serif;color:#000;">01. 12. 2025</div>
<div class="t" style="left:925px;top:227px;font:12px/1 'Liberation Sans',sans-serif;color:#000;">kúpa</div>
<div class="a" style="left:1055px;top:222px;width:22px;height:22px;border-radius:50%;background:radial-gradient(closest-side,rgba(160,160,160,.28),rgba(160,160,160,.12) 55%,rgba(160,160,160,0))"></div>
<div class="a" style="left:241px;top:253px;width:924px;height:38px;background:#fff"></div>
<div class="a" style="left:241px;top:291px;width:924px;height:1px;background:#d3e8fb"></div>
<div class="a" style="left:301px;top:253px;width:1px;height:39px;background:#d3e8fb"></div>
<div class="a" style="left:390px;top:253px;width:1px;height:39px;background:#d3e8fb"></div>
<div class="a" style="left:485px;top:253px;width:1px;height:39px;background:#d3e8fb"></div>
<div class="a" style="left:531px;top:253px;width:1px;height:39px;background:#d3e8fb"></div>
<div class="a" style="left:603px;top:253px;width:1px;height:39px;background:#d3e8fb"></div>
<div class="a" style="left:657px;top:253px;width:1px;height:39px;background:#d3e8fb"></div>
<div class="a" style="left:707px;top:253px;width:1px;height:39px;background:#d3e8fb"></div>
<div class="a" style="left:784px;top:253px;width:1px;height:39px;background:#d3e8fb"></div>
<div class="a" style="left:917px;top:253px;width:1px;height:39px;background:#d3e8fb"></div>
<div class="a" style="left:1056px;top:253px;width:1px;height:39px;background:#d3e8fb"></div>
<div class="t" style="left:248px;top:266px;font:12px/1 'Liberation Sans',sans-serif;color:#000;">251253</div>
<div class="t" style="left:309px;top:259px;font:12px/1 'Liberation Sans',sans-serif;color:#000;">Elektrické</div>
<div class="t" style="left:309px;top:273px;font:12px/1 'Liberation Sans',sans-serif;color:#000;">spotrebiče</div>
<div class="t" style="left:398px;top:266px;font:12px/1 'Liberation Sans',sans-serif;color:#000;">Ventilátor 14</div>
<div class="t" style="left:516px;top:266px;font:12px/1 'Liberation Sans',sans-serif;color:#000;">1</div>
<div class="t" style="left:539px;top:266px;font:12px/1 'Liberation Sans',sans-serif;color:#000;">-</div>
<div class="t" style="left:622px;top:266px;font:12px/1 'Liberation Sans',sans-serif;color:#000;">2025</div>
<div class="t" style="left:669px;top:266px;font:12px/1 'Liberation Sans',sans-serif;color:#000;">12.80</div>
<div class="t" style="left:746px;top:266px;font:12px/1 'Liberation Sans',sans-serif;color:#000;">12.80</div>
<div class="t" style="left:793px;top:266px;font:12px/1 'Liberation Sans',sans-serif;color:#000;">01. 12. 2025</div>
<div class="t" style="left:925px;top:266px;font:12px/1 'Liberation Sans',sans-serif;color:#000;">kúpa</div>
<div class="a" style="left:1055px;top:261px;width:22px;height:22px;border-radius:50%;background:radial-gradient(closest-side,rgba(160,160,160,.28),rgba(160,160,160,.12) 55%,rgba(160,160,160,0))"></div>
<div class="a" style="left:241px;top:292px;width:924px;height:38px;background:#fafafa"></div>
<div class="a" style="left:241px;top:330px;width:924px;height:1px;background:#d3e8fb"></div>
<div class="a" style="left:301px;top:292px;width:1px;height:39px;background:#d3e8fb"></div>
<div class="a" style="left:390px;top:292px;width:1px;height:39px;background:#d3e8fb"></div>
<div class="a" style="left:485px;top:292px;width:1px;height:39px;background:#d3e8fb"></div>
<div class="a" style="left:531px;top:292px;width:1px;height:39px;background:#d3e8fb"></div>
<div class="a" style="left:603px;top:292px;width:1px;height:39px;background:#d3e8fb"></div>
<div class="a" style="left:657px;top:292px;width:1px;height:39px;background:#d3e8fb"></div>
<div class="a" style="left:707px;top:292px;width:1px;height:39px;background:#d3e8fb"></div>
<div class="a" style="left:784px;top:292px;width:1px;height:39px;background:#d3e8fb"></div>
<div class="a" style="left:917px;top:292px;width:1px;height:39px;background:#d3e8fb"></div>
<div class="a" style="left:1056px;top:292px;width:1px;height:39px;background:#d3e8fb"></div>
<div class="t" style="left:248px;top:305px;font:12px/1 'Liberation Sans',sans-serif;color:#000;">251252</div>
<div class="t" style="left:309px;top:298px;font:12px/1 'Liberation Sans',sans-serif;color:#000;">Elektrické</div>
<div class="t" style="left:309px;top:312px;font:12px/1 'Liberation Sans',sans-serif;color:#000;">spotrebiče</div>
<div class="t" style="left:398px;top:305px;font:12px/1 'Liberation Sans',sans-serif;color:#000;">Ventilátor 13</div>
<div class="t" style="left:516px;top:305px;font:12px/1 'Liberation Sans',sans-serif;color:#000;">1</div>
<div class="t" style="left:539px;top:305px;font:12px/1 'Liberation Sans',sans-serif;color:#000;">-</div>
<div class="t" style="left:622px;top:305px;font:12px/1 'Liberation Sans',sans-serif;color:#000;">2025</div>
<div class="t" style="left:669px;top:305px;font:12px/1 'Liberation Sans',sans-serif;color:#000;">12.80</div>
<div class="t" style="left:746px;top:305px;font:12px/1 'Liberation Sans',sans-serif;color:#000;">12.80</div>
<div class="t" style="left:793px;top:305px;font:12px/1 'Liberation Sans',sans-serif;color:#000;">01. 12. 2025</div>
<div class="t" style="left:925px;top:305px;font:12px/1 'Liberation Sans',sans-serif;color:#000;">kúpa</div>
<div class="a" style="left:1055px;top:300px;width:22px;height:22px;border-radius:50%;background:radial-gradient(closest-side,rgba(160,160,160,.28),rgba(160,160,160,.12) 55%,rgba(160,160,160,0))"></div>
<div class="a" style="left:241px;top:331px;width:924px;height:38px;background:#fff"></div>
<div class="a" style="left:241px;top:369px;width:924px;height:1px;background:#d3e8fb"></div>
<div class="a" style="left:301px;top:331px;width:1px;height:39px;background:#d3e8fb"></div>
<div class="a" style="left:390px;top:331px;width:1px;height:39px;background:#d3e8fb"></div>
<div class="a" style="left:485px;top:331px;width:1px;height:39px;background:#d3e8fb"></div>
<div class="a" style="left:531px;top:331px;width:1px;height:39px;background:#d3e8fb"></div>
<div class="a" style="left:603px;top:331px;width:1px;height:39px;background:#d3e8fb"></div>
<div class="a" style="left:657px;top:331px;width:1px;height:39px;background:#d3e8fb"></div>
<div class="a" style="left:707px;top:331px;width:1px;height:39px;background:#d3e8fb"></div>
<div class="a" style="left:784px;top:331px;width:1px;height:39px;background:#d3e8fb"></div>
<div class="a" style="left:917px;top:331px;width:1px;height:39px;background:#d3e8fb"></div>
<div class="a" style="left:1056px;top:331px;width:1px;height:39px;background:#d3e8fb"></div>
<div class="t" style="left:248px;top:344px;font:12px/1 'Liberation Sans',sans-serif;color:#000;">251251</div>
<div class="t" style="left:309px;top:337px;font:12px/1 'Liberation Sans',sans-serif;color:#000;">Elektrické</div>
<div class="t" style="left:309px;top:351px;font:12px/1 'Liberation Sans',sans-serif;color:#000;">spotrebiče</div>
<div class="t" style="left:398px;top:344px;font:12px/1 'Liberation Sans',sans-serif;color:#000;">Ventilátor 12</div>
<div class="t" style="left:516px;top:344px;font:12px/1 'Liberation Sans',sans-serif;color:#000;">1</div>
<div class="t" style="left:539px;top:344px;font:12px/1 'Liberation Sans',sans-serif;color:#000;">-</div>
<div class="t" style="left:622px;top:344px;font:12px/1 'Liberation Sans',sans-serif;color:#000;">2025</div>
<div class="t" style="left:669px;top:344px;font:12px/1 'Liberation Sans',sans-serif;color:#000;">12.80</div>
<div class="t" style="left:746px;top:344px;font:12px/1 'Liberation Sans',sans-serif;color:#000;">12.80</div>
<div class="t" style="left:793px;top:344px;font:12px/1 'Liberation Sans',sans-serif;color:#000;">01. 12. 2025</div>
<div class="t" style="left:925px;top:344px;font:12px/1 'Liberation Sans',sans-serif;color:#000;">kúpa</div>
<div class="a" style="left:1055px;top:339px;width:22px;height:22px;border-radius:50%;background:radial-gradient(closest-side,rgba(160,160,160,.28),rgba(160,160,160,.12) 55%,rgba(160,160,160,0))"></div>
<div class="a" style="left:241px;top:370px;width:924px;height:38px;background:#fafafa"></div>
<div class="a" style="left:241px;top:408px;width:924px;height:1px;background:#d3e8fb"></div>
<div class="a" style="left:301px;top:370px;width:1px;height:39px;background:#d3e8fb"></div>
<div class="a" style="left:390px;top:370px;width:1px;height:39px;background:#d3e8fb"></div>
<div class="a" style="left:485px;top:370px;width:1px;height:39px;background:#d3e8fb"></div>
<div class="a" style="left:531px;top:370px;width:1px;height:39px;background:#d3e8fb"></div>
<div class="a" style="left:603px;top:370px;width:1px;height:39px;background:#d3e8fb"></div>
<div class="a" style="left:657px;top:370px;width:1px;height:39px;background:#d3e8fb"></div>
<div class="a" style="left:707px;top:370px;width:1px;height:39px;background:#d3e8fb"></div>
<div class="a" style="left:784px;top:370px;width:1px;height:39px;background:#d3e8fb"></div>
<div class="a" style="left:917px;top:370px;width:1px;height:39px;background:#d3e8fb"></div>
<div class="a" style="left:1056px;top:370px;width:1px;height:39px;background:#d3e8fb"></div>
<div class="t" style="left:248px;top:383px;font:12px/1 'Liberation Sans',sans-serif;color:#000;">251250</div>
<div class="t" style="left:309px;top:376px;font:12px/1 'Liberation Sans',sans-serif;color:#000;">Elektrické</div>
<div class="t" style="left:309px;top:390px;font:12px/1 'Liberation Sans',sans-serif;color:#000;">spotrebiče</div>
<div class="t" style="left:398px;top:383px;font:12px/1 'Liberation Sans',sans-serif;color:#000;">Ventilátor 11</div>
<div class="t" style="left:516px;top:383px;font:12px/1 'Liberation Sans',sans-serif;color:#000;">5</div>
<div class="t" style="left:539px;top:383px;font:12px/1 'Liberation Sans',sans-serif;color:#000;">-</div>
<div class="t" style="left:622px;top:383px;font:12px/1 'Liberation Sans',sans-serif;color:#000;">2025</div>
<div class="t" style="left:669px;top:383px;font:12px/1 'Liberation Sans',sans-serif;color:#000;">12.80</div>
<div class="t" style="left:746px;top:383px;font:12px/1 'Liberation Sans',sans-serif;color:#000;">64.00</div>
<div class="t" style="left:793px;top:383px;font:12px/1 'Liberation Sans',sans-serif;color:#000;">01. 12. 2025</div>
<div class="t" style="left:925px;top:383px;font:12px/1 'Liberation Sans',sans-serif;color:#000;">kúpa</div>
<div class="a" style="left:1055px;top:378px;width:22px;height:22px;border-radius:50%;background:radial-gradient(closest-side,rgba(160,160,160,.28),rgba(160,160,160,.12) 55%,rgba(160,160,160,0))"></div>
<div class="a" style="left:241px;top:409px;width:924px;height:38px;background:#fff"></div>
<div class="a" style="left:241px;top:447px;width:924px;height:1px;background:#d3e8fb"></div>
<div class="a" style="left:301px;top:409px;width:1px;height:39px;background:#d3e8fb"></div>
<div class="a" style="left:390px;top:409px;width:1px;height:39px;background:#d3e8fb"></div>
<div class="a" style="left:485px;top:409px;width:1px;height:39px;background:#d3e8fb"></div>
<div class="a" style="left:531px;top:409px;width:1px;height:39px;background:#d3e8fb"></div>
<div class="a" style="left:603px;top:409px;width:1px;height:39px;background:#d3e8fb"></div>
<div class="a" style="left:657px;top:409px;width:1px;height:39px;background:#d3e8fb"></div>
<div class="a" style="left:707px;top:409px;width:1px;height:39px;background:#d3e8fb"></div>
<div class="a" style="left:784px;top:409px;width:1px;height:39px;background:#d3e8fb"></div>
<div class="a" style="left:917px;top:409px;width:1px;height:39px;background:#d3e8fb"></div>
<div class="a" style="left:1056px;top:409px;width:1px;height:39px;background:#d3e8fb"></div>
<div class="t" style="left:248px;top:422px;font:12px/1 'Liberation Sans',sans-serif;color:#000;">251249</div>
<div class="t" style="left:309px;top:415px;font:12px/1 'Liberation Sans',sans-serif;color:#000;">Elektrické</div>
<div class="t" style="left:309px;top:429px;font:12px/1 'Liberation Sans',sans-serif;color:#000;">spotrebiče</div>
<div class="t" style="left:398px;top:422px;font:12px/1 'Liberation Sans',sans-serif;color:#000;">Ventilátor 10</div>
<div class="t" style="left:516px;top:422px;font:12px/1 'Liberation Sans',sans-serif;color:#000;">1</div>
<div class="t" style="left:539px;top:422px;font:12px/1 'Liberation Sans',sans-serif;color:#000;">-</div>
<div class="t" style="left:622px;top:422px;font:12px/1 'Liberation Sans',sans-serif;color:#000;">2025</div>
<div class="t" style="left:669px;top:422px;font:12px/1 'Liberation Sans',sans-serif;color:#000;">12.80</div>
<div class="t" style="left:746px;top:422px;font:12px/1 'Liberation Sans',sans-serif;color:#000;">12.80</div>
<div class="t" style="left:793px;top:422px;font:12px/1 'Liberation Sans',sans-serif;color:#000;">01. 12. 2025</div>
<div class="t" style="left:925px;top:422px;font:12px/1 'Liberation Sans',sans-serif;color:#000;">kúpa</div>
<div class="a" style="left:1055px;top:417px;width:22px;height:22px;border-radius:50%;background:radial-gradient(closest-side,rgba(160,160,160,.28),rgba(160,160,160,.12) 55%,rgba(160,160,160,0))"></div>
<div class="a" style="left:241px;top:448px;width:924px;height:38px;background:#fafafa"></div>
<div class="a" style="left:241px;top:486px;width:924px;height:1px;background:#d3e8fb"></div>
<div class="a" style="left:301px;top:448px;width:1px;height:39px;background:#d3e8fb"></div>
<div class="a" style="left:390px;top:448px;width:1px;height:39px;background:#d3e8fb"></div>
<div class="a" style="left:485px;top:448px;width:1px;height:39px;background:#d3e8fb"></div>
<div class="a" style="left:531px;top:448px;width:1px;height:39px;background:#d3e8fb"></div>
<div class="a" style="left:603px;top:448px;width:1px;height:39px;background:#d3e8fb"></div>
<div class="a" style="left:657px;top:448px;width:1px;height:39px;background:#d3e8fb"></div>
<div class="a" style="left:707px;top:448px;width:1px;height:39px;background:#d3e8fb"></div>
<div class="a" style="left:784px;top:448px;width:1px;height:39px;background:#d3e8fb"></div>
<div class="a" style="left:917px;top:448px;width:1px;height:39px;background:#d3e8fb"></div>
<div class="a" style="left:1056px;top:448px;width:1px;height:39px;background:#d3e8fb"></div>
<div class="t" style="left:248px;top:461px;font:12px/1 'Liberation Sans',sans-serif;color:#000;">251248</div>
<div class="t" style="left:309px;top:454px;font:12px/1 'Liberation Sans',sans-serif;color:#000;">Elektrické</div>
<div class="t" style="left:309px;top:468px;font:12px/1 'Liberation Sans',sans-serif;color:#000;">spotrebiče</div>
<div class="t" style="left:398px;top:461px;font:12px/1 'Liberation Sans',sans-serif;color:#000;">Ventilátor 09</div>
<div class="t" style="left:516px;top:461px;font:12px/1 'Liberation Sans',sans-serif;color:#000;">1</div>
<div class="t" style="left:539px;top:461px;font:12px/1 'Liberation Sans',sans-serif;color:#000;">-</div>
<div class="t" style="left:622px;top:461px;font:12px/1 'Liberation Sans',sans-serif;color:#000;">2025</div>
<div class="t" style="left:669px;top:461px;font:12px/1 'Liberation Sans',sans-serif;color:#000;">14.50</div>
<div class="t" style="left:746px;top:461px;font:12px/1 'Liberation Sans',sans-serif;color:#000;">14.50</div>
<div class="t" style="left:793px;top:461px;font:12px/1 'Liberation Sans',sans-serif;color:#000;">01. 12. 2025</div>
<div class="t" style="left:925px;top:461px;font:12px/1 'Liberation Sans',sans-serif;color:#000;">kúpa</div>
<div class="a" style="left:1055px;top:456px;width:22px;height:22px;border-radius:50%;background:radial-gradient(closest-side,rgba(160,160,160,.28),rgba(160,160,160,.12) 55%,rgba(160,160,160,0))"></div>
<div class="a" style="left:241px;top:487px;width:924px;height:38px;background:#fff"></div>
<div class="a" style="left:241px;top:525px;width:924px;height:1px;background:#d3e8fb"></div>
<div class="a" style="left:301px;top:487px;width:1px;height:39px;background:#d3e8fb"></div>
<div class="a" style="left:390px;top:487px;width:1px;height:39px;background:#d3e8fb"></div>
<div class="a" style="left:485px;top:487px;width:1px;height:39px;background:#d3e8fb"></div>
<div class="a" style="left:531px;top:487px;width:1px;height:39px;background:#d3e8fb"></div>
<div class="a" style="left:603px;top:487px;width:1px;height:39px;background:#d3e8fb"></div>
<div class="a" style="left:657px;top:487px;width:1px;height:39px;background:#d3e8fb"></div>
<div class="a" style="left:707px;top:487px;width:1px;height:39px;background:#d3e8fb"></div>
<div class="a" style="left:784px;top:487px;width:1px;height:39px;background:#d3e8fb"></div>
<div class="a" style="left:917px;top:487px;width:1px;height:39px;background:#d3e8fb"></div>
<div class="a" style="left:1056px;top:487px;width:1px;height:39px;background:#d3e8fb"></div>
<div class="t" style="left:248px;top:500px;font:12px/1 'Liberation Sans',sans-serif;color:#000;">251247</div>
<div class="t" style="left:309px;top:493px;font:12px/1 'Liberation Sans',sans-serif;color:#000;">Elektrické</div>
<div class="t" style="left:309px;top:507px;font:12px/1 'Liberation Sans',sans-serif;color:#000;">spotrebiče</div>
<div class="t" style="left:398px;top:500px;font:12px/1 'Liberation Sans',sans-serif;color:#000;">Ventilátor 08</div>
<div class="t" style="left:516px;top:500px;font:12px/1 'Liberation Sans',sans-serif;color:#000;">3</div>
<div class="t" style="left:539px;top:500px;font:12px/1 'Liberation Sans',sans-serif;color:#000;">-</div>
<div class="t" style="left:622px;top:500px;font:12px/1 'Liberation Sans',sans-serif;color:#000;">2025</div>
<div class="t" style="left:669px;top:500px;font:12px/1 'Liberation Sans',sans-serif;color:#000;">12.80</div>
<div class="t" style="left:746px;top:500px;font:12px/1 'Liberation Sans',sans-serif;color:#000;">38.40</div>
<div class="t" style="left:793px;top:500px;font:12px/1 'Liberation Sans',sans-serif;color:#000;">01. 12. 2025</div>
<div class="t" style="left:925px;top:500px;font:12px/1 'Liberation Sans',sans-serif;color:#000;">kúpa</div>
<div class="a" style="left:1055px;top:495px;width:22px;height:22px;border-radius:50%;background:radial-gradient(closest-side,rgba(160,160,160,.28),rgba(160,160,160,.12) 55%,rgba(160,160,160,0))"></div>
<div class="a" style="left:241px;top:526px;width:924px;height:38px;background:#fafafa"></div>
<div class="a" style="left:241px;top:564px;width:924px;height:1px;background:#d3e8fb"></div>
<div class="a" style="left:301px;top:526px;width:1px;height:39px;background:#d3e8fb"></div>
<div class="a" style="left:390px;top:526px;width:1px;height:39px;background:#d3e8fb"></div>
<div class="a" style="left:485px;top:526px;width:1px;height:39px;background:#d3e8fb"></div>
<div class="a" style="left:531px;top:526px;width:1px;height:39px;background:#d3e8fb"></div>
<div class="a" style="left:603px;top:526px;width:1px;height:39px;background:#d3e8fb"></div>
<div class="a" style="left:657px;top:526px;width:1px;height:39px;background:#d3e8fb"></div>
<div class="a" style="left:707px;top:526px;width:1px;height:39px;background:#d3e8fb"></div>
<div class="a" style="left:784px;top:526px;width:1px;height:39px;background:#d3e8fb"></div>
<div class="a" style="left:917px;top:526px;width:1px;height:39px;background:#d3e8fb"></div>
<div class="a" style="left:1056px;top:526px;width:1px;height:39px;background:#d3e8fb"></div>
<div class="t" style="left:248px;top:539px;font:12px/1 'Liberation Sans',sans-serif;color:#888;text-decoration:line-through;">251246</div>
<div class="t" style="left:309px;top:532px;font:12px/1 'Liberation Sans',sans-serif;color:#888;text-decoration:line-through;">Elektrické</div>
<div class="t" style="left:309px;top:546px;font:12px/1 'Liberation Sans',sans-serif;color:#888;text-decoration:line-through;">spotrebiče</div>
<div class="t" style="left:398px;top:539px;font:12px/1 'Liberation Sans',sans-serif;color:#888;text-decoration:line-through;">Ventilátor 07</div>
<div class="t" style="left:516px;top:539px;font:12px/1 'Liberation Sans',sans-serif;color:#888;text-decoration:line-through;">1</div>
<div class="t" style="left:539px;top:539px;font:12px/1 'Liberation Sans',sans-serif;color:#888;text-decoration:line-through;">-</div>
<div class="t" style="left:622px;top:539px;font:12px/1 'Liberation Sans',sans-serif;color:#888;text-decoration:line-through;">2025</div>
<div class="t" style="left:669px;top:539px;font:12px/1 'Liberation Sans',sans-serif;color:#888;text-decoration:line-through;">12.80</div>
<div class="t" style="left:746px;top:539px;font:12px/1 'Liberation Sans',sans-serif;color:#888;text-decoration:line-through;">12.80</div>
<div class="t" style="left:793px;top:539px;font:12px/1 'Liberation Sans',sans-serif;color:#888;text-decoration:line-through;">01. 12. 2025</div>
<div class="t" style="left:925px;top:539px;font:12px/1 'Liberation Sans',sans-serif;color:#888;text-decoration:line-through;">kúpa</div>
<div class="a" style="left:1064px;top:545px;width:5px;height:1px;background:#777"></div>
<div class="a" style="left:1055px;top:534px;width:22px;height:22px;border-radius:50%;background:radial-gradient(closest-side,rgba(160,160,160,.28),rgba(160,160,160,.12) 55%,rgba(160,160,160,0))"></div>
<div class="a" style="left:241px;top:565px;width:924px;height:38px;background:#fff"></div>
<div class="a" style="left:241px;top:603px;width:924px;height:1px;background:#d3e8fb"></div>
<div class="a" style="left:301px;top:565px;width:1px;height:39px;background:#d3e8fb"></div>
<div class="a" style="left:390px;top:565px;width:1px;height:39px;background:#d3e8fb"></div>
<div class="a" style="left:485px;top:565px;width:1px;height:39px;background:#d3e8fb"></div>
<div class="a" style="left:531px;top:565px;width:1px;height:39px;background:#d3e8fb"></div>
<div class="a" style="left:603px;top:565px;width:1px;height:39px;background:#d3e8fb"></div>
<div class="a" style="left:657px;top:565px;width:1px;height:39px;background:#d3e8fb"></div>
<div class="a" style="left:707px;top:565px;width:1px;height:39px;background:#d3e8fb"></div>
<div class="a" style="left:784px;top:565px;width:1px;height:39px;background:#d3e8fb"></div>
<div class="a" style="left:917px;top:565px;width:1px;height:39px;background:#d3e8fb"></div>
<div class="a" style="left:1056px;top:565px;width:1px;height:39px;background:#d3e8fb"></div>
<div class="t" style="left:248px;top:578px;font:12px/1 'Liberation Sans',sans-serif;color:#000;">251245</div>
<div class="t" style="left:309px;top:571px;font:12px/1 'Liberation Sans',sans-serif;color:#000;">Elektrické</div>
<div class="t" style="left:309px;top:585px;font:12px/1 'Liberation Sans',sans-serif;color:#000;">spotrebiče</div>
<div class="t" style="left:398px;top:578px;font:12px/1 'Liberation Sans',sans-serif;color:#000;">Ventilátor 06</div>
<div class="t" style="left:516px;top:578px;font:12px/1 'Liberation Sans',sans-serif;color:#000;">7</div>
<div class="t" style="left:539px;top:578px;font:12px/1 'Liberation Sans',sans-serif;color:#000;">-</div>
<div class="t" style="left:622px;top:578px;font:12px/1 'Liberation Sans',sans-serif;color:#000;">2025</div>
<div class="t" style="left:669px;top:578px;font:12px/1 'Liberation Sans',sans-serif;color:#000;">14.50</div>
<div class="t" style="left:739px;top:578px;font:12px/1 'Liberation Sans',sans-serif;color:#000;">101.50</div>
<div class="t" style="left:793px;top:578px;font:12px/1 'Liberation Sans',sans-serif;color:#000;">01. 12. 2025</div>
<div class="t" style="left:925px;top:578px;font:12px/1 'Liberation Sans',sans-serif;color:#000;">kúpa</div>
<div class="a" style="left:1055px;top:573px;width:22px;height:22px;border-radius:50%;background:radial-gradient(closest-side,rgba(160,160,160,.28),rgba(160,160,160,.12) 55%,rgba(160,160,160,0))"></div>
<div class="a" style="left:241px;top:604px;width:924px;height:38px;background:#fafafa"></div>
<div class="a" style="left:241px;top:642px;width:924px;height:1px;background:#d3e8fb"></div>
<div class="a" style="left:301px;top:604px;width:1px;height:39px;background:#d3e8fb"></div>
<div class="a" style="left:390px;top:604px;width:1px;height:39px;background:#d3e8fb"></div>
<div class="a" style="left:485px;top:604px;width:1px;height:39px;background:#d3e8fb"></div>
<div class="a" style="left:531px;top:604px;width:1px;height:39px;background:#d3e8fb"></div>
<div class="a" style="left:603px;top:604px;width:1px;height:39px;background:#d3e8fb"></div>
<div class="a" style="left:657px;top:604px;width:1px;height:39px;background:#d3e8fb"></div>
<div class="a" style="left:707px;top:604px;width:1px;height:39px;background:#d3e8fb"></div>
<div class="a" style="left:784px;top:604px;width:1px;height:39px;background:#d3e8fb"></div>
<div class="a" style="left:917px;top:604px;width:1px;height:39px;background:#d3e8fb"></div>
<div class="a" style="left:1056px;top:604px;width:1px;height:39px;background:#d3e8fb"></div>
<div class="t" style="left:248px;top:617px;font:12px/1 'Liberation Sans',sans-serif;color:#000;">251244</div>
<div class="t" style="left:309px;top:610px;font:12px/1 'Liberation Sans',sans-serif;color:#000;">Elektrické</div>
<div class="t" style="left:309px;top:624px;font:12px/1 'Liberation Sans',sans-serif;color:#000;">spotrebiče</div>
<div class="t" style="left:398px;top:617px;font:12px/1 'Liberation Sans',sans-serif;color:#000;">Ventilátor 05</div>
<div class="t" style="left:516px;top:617px;font:12px/1 'Liberation Sans',sans-serif;color:#000;">1</div>
<div class="t" style="left:539px;top:617px;font:12px/1 'Liberation Sans',sans-serif;color:#000;">-</div>
<div class="t" style="left:622px;top:617px;font:12px/1 'Liberation Sans',sans-serif;color:#000;">2025</div>
<div class="t" style="left:669px;top:617px;font:12px/1 'Liberation Sans',sans-serif;color:#000;">12.80</div>
<div class="t" style="left:746px;top:617px;font:12px/1 'Liberation Sans',sans-serif;color:#000;">12.80</div>
<div class="t" style="left:793px;top:617px;font:12px/1 'Liberation Sans',sans-serif;color:#000;">01. 12. 2025</div>
<div class="t" style="left:925px;top:617px;font:12px/1 'Liberation Sans',sans-serif;color:#000;">kúpa</div>
<div class="a" style="left:1055px;top:612px;width:22px;height:22px;border-radius:50%;background:radial-gradient(closest-side,rgba(160,160,160,.28),rgba(160,160,160,.12) 55%,rgba(160,160,160,0))"></div>
<div class="a" style="left:241px;top:643px;width:924px;height:38px;background:#fff"></div>
<div class="a" style="left:241px;top:681px;width:924px;height:1px;background:#d3e8fb"></div>
<div class="a" style="left:301px;top:643px;width:1px;height:39px;background:#d3e8fb"></div>
<div class="a" style="left:390px;top:643px;width:1px;height:39px;background:#d3e8fb"></div>
<div class="a" style="left:485px;top:643px;width:1px;height:39px;background:#d3e8fb"></div>
<div class="a" style="left:531px;top:643px;width:1px;height:39px;background:#d3e8fb"></div>
<div class="a" style="left:603px;top:643px;width:1px;height:39px;background:#d3e8fb"></div>
<div class="a" style="left:657px;top:643px;width:1px;height:39px;background:#d3e8fb"></div>
<div class="a" style="left:707px;top:643px;width:1px;height:39px;background:#d3e8fb"></div>
<div class="a" style="left:784px;top:643px;width:1px;height:39px;background:#d3e8fb"></div>
<div class="a" style="left:917px;top:643px;width:1px;height:39px;background:#d3e8fb"></div>
<div class="a" style="left:1056px;top:643px;width:1px;height:39px;background:#d3e8fb"></div>
<div class="t" style="left:248px;top:656px;font:12px/1 'Liberation Sans',sans-serif;color:#000;">251243</div>
<div class="t" style="left:309px;top:649px;font:12px/1 'Liberation Sans',sans-serif;color:#000;">Elektrické</div>
<div class="t" style="left:309px;top:663px;font:12px/1 'Liberation Sans',sans-serif;color:#000;">spotrebiče</div>
<div class="t" style="left:398px;top:656px;font:12px/1 'Liberation Sans',sans-serif;color:#000;">Ventilátor 04</div>
<div class="t" style="left:516px;top:656px;font:12px/1 'Liberation Sans',sans-serif;color:#000;">1</div>
<div class="t" style="left:539px;top:656px;font:12px/1 'Liberation Sans',sans-serif;color:#000;">-</div>
<div class="t" style="left:622px;top:656px;font:12px/1 'Liberation Sans',sans-serif;color:#000;">2025</div>
<div class="t" style="left:669px;top:656px;font:12px/1 'Liberation Sans',sans-serif;color:#000;">12.80</div>
<div class="t" style="left:746px;top:656px;font:12px/1 'Liberation Sans',sans-serif;color:#000;">12.80</div>
<div class="t" style="left:793px;top:656px;font:12px/1 'Liberation Sans',sans-serif;color:#000;">01. 12. 2025</div>
<div class="t" style="left:925px;top:656px;font:12px/1 'Liberation Sans',sans-serif;color:#000;">kúpa</div>
<div class="a" style="left:1055px;top:651px;width:22px;height:22px;border-radius:50%;background:radial-gradient(closest-side,rgba(160,160,160,.28),rgba(160,160,160,.12) 55%,rgba(160,160,160,0))"></div>
<div class="a" style="left:241px;top:682px;width:924px;height:38px;background:#fafafa"></div>
<div class="a" style="left:241px;top:720px;width:924px;height:1px;background:#d3e8fb"></div>
<div class="a" style="left:301px;top:682px;width:1px;height:39px;background:#d3e8fb"></div>
<div class="a" style="left:390px;top:682px;width:1px;height:39px;background:#d3e8fb"></div>
<div class="a" style="left:485px;top:682px;width:1px;height:39px;background:#d3e8fb"></div>
<div class="a" style="left:531px;top:682px;width:1px;height:39px;background:#d3e8fb"></div>
<div class="a" style="left:603px;top:682px;width:1px;height:39px;background:#d3e8fb"></div>
<div class="a" style="left:657px;top:682px;width:1px;height:39px;background:#d3e8fb"></div>
<div class="a" style="left:707px;top:682px;width:1px;height:39px;background:#d3e8fb"></div>
<div class="a" style="left:784px;top:682px;width:1px;height:39px;background:#d3e8fb"></div>
<div class="a" style="left:917px;top:682px;width:1px;height:39px;background:#d3e8fb"></div>
<div class="a" style="left:1056px;top:682px;width:1px;height:39px;background:#d3e8fb"></div>
<div class="t" style="left:248px;top:695px;font:12px/1 'Liberation Sans',sans-serif;color:#000;">251242</div>
<div class="t" style="left:309px;top:688px;font:12px/1 'Liberation Sans',sans-serif;color:#000;">Elektrické</div>
<div class="t" style="left:309px;top:702px;font:12px/1 'Liberation Sans',sans-serif;color:#000;">spotrebiče</div>
<div class="t" style="left:398px;top:695px;font:12px/1 'Liberation Sans',sans-serif;color:#000;">Ventilátor 03</div>
<div class="t" style="left:516px;top:695px;font:12px/1 'Liberation Sans',sans-serif;color:#000;">1</div>
<div class="t" style="left:539px;top:695px;font:12px/1 'Liberation Sans',sans-serif;color:#000;">-</div>
<div class="t" style="left:622px;top:695px;font:12px/1 'Liberation Sans',sans-serif;color:#000;">2025</div>
<div class="t" style="left:669px;top:695px;font:12px/1 'Liberation Sans',sans-serif;color:#000;">14.50</div>
<div class="t" style="left:746px;top:695px;font:12px/1 'Liberation Sans',sans-serif;color:#000;">14.50</div>
<div class="t" style="left:793px;top:695px;font:12px/1 'Liberation Sans',sans-serif;color:#000;">01. 12. 2025</div>
<div class="t" style="left:925px;top:695px;font:12px/1 'Liberation Sans',sans-serif;color:#000;">kúpa</div>
<div class="a" style="left:1055px;top:690px;width:22px;height:22px;border-radius:50%;background:radial-gradient(closest-side,rgba(160,160,160,.28),rgba(160,160,160,.12) 55%,rgba(160,160,160,0))"></div>
<div class="a" style="left:241px;top:721px;width:924px;height:38px;background:#fff"></div>
<div class="a" style="left:241px;top:759px;width:924px;height:1px;background:#d3e8fb"></div>
<div class="a" style="left:301px;top:721px;width:1px;height:39px;background:#d3e8fb"></div>
<div class="a" style="left:390px;top:721px;width:1px;height:39px;background:#d3e8fb"></div>
<div class="a" style="left:485px;top:721px;width:1px;height:39px;background:#d3e8fb"></div>
<div class="a" style="left:531px;top:721px;width:1px;height:39px;background:#d3e8fb"></div>
<div class="a" style="left:603px;top:721px;width:1px;height:39px;background:#d3e8fb"></div>
<div class="a" style="left:657px;top:721px;width:1px;height:39px;background:#d3e8fb"></div>
<div class="a" style="left:707px;top:721px;width:1px;height:39px;background:#d3e8fb"></div>
<div class="a" style="left:784px;top:721px;width:1px;height:39px;background:#d3e8fb"></div>
<div class="a" style="left:917px;top:721px;width:1px;height:39px;background:#d3e8fb"></div>
<div class="a" style="left:1056px;top:721px;width:1px;height:39px;background:#d3e8fb"></div>
<div class="t" style="left:248px;top:734px;font:12px/1 'Liberation Sans',sans-serif;color:#000;">251241</div>
<div class="t" style="left:309px;top:727px;font:12px/1 'Liberation Sans',sans-serif;color:#000;">Elektrické</div>
<div class="t" style="left:309px;top:741px;font:12px/1 'Liberation Sans',sans-serif;color:#000;">spotrebiče</div>
<div class="t" style="left:398px;top:734px;font:12px/1 'Liberation Sans',sans-serif;color:#000;">Ventilátor 02</div>
<div class="t" style="left:516px;top:734px;font:12px/1 'Liberation Sans',sans-serif;color:#000;">5</div>
<div class="t" style="left:539px;top:734px;font:12px/1 'Liberation Sans',sans-serif;color:#000;">-</div>
<div class="t" style="left:622px;top:734px;font:12px/1 'Liberation Sans',sans-serif;color:#000;">2025</div>
<div class="t" style="left:669px;top:734px;font:12px/1 'Liberation Sans',sans-serif;color:#000;">12.80</div>
<div class="t" style="left:746px;top:734px;font:12px/1 'Liberation Sans',sans-serif;color:#000;">64.00</div>
<div class="t" style="left:793px;top:734px;font:12px/1 'Liberation Sans',sans-serif;color:#000;">01. 12. 2025</div>
<div class="t" style="left:925px;top:734px;font:12px/1 'Liberation Sans',sans-serif;color:#000;">kúpa</div>
<div class="a" style="left:1055px;top:729px;width:22px;height:22px;border-radius:50%;background:radial-gradient(closest-side,rgba(160,160,160,.28),rgba(160,160,160,.12) 55%,rgba(160,160,160,0))"></div>
<div class="a" style="left:241px;top:760px;width:924px;height:38px;background:#fafafa"></div>
<div class="a" style="left:241px;top:798px;width:924px;height:1px;background:#d3e8fb"></div>
<div class="a" style="left:301px;top:760px;width:1px;height:39px;background:#d3e8fb"></div>
<div class="a" style="left:390px;top:760px;width:1px;height:39px;background:#d3e8fb"></div>
<div class="a" style="left:485px;top:760px;width:1px;height:39px;background:#d3e8fb"></div>
<div class="a" style="left:531px;top:760px;width:1px;height:39px;background:#d3e8fb"></div>
<div class="a" style="left:603px;top:760px;width:1px;height:39px;background:#d3e8fb"></div>
<div class="a" style="left:657px;top:760px;width:1px;height:39px;background:#d3e8fb"></div>
<div class="a" style="left:707px;top:760px;width:1px;height:39px;background:#d3e8fb"></div>
<div class="a" style="left:784px;top:760px;width:1px;height:39px;background:#d3e8fb"></div>
<div class="a" style="left:917px;top:760px;width:1px;height:39px;background:#d3e8fb"></div>
<div class="a" style="left:1056px;top:760px;width:1px;height:39px;background:#d3e8fb"></div>
<div class="t" style="left:248px;top:773px;font:12px/1 'Liberation Sans',sans-serif;color:#000;">251240</div>
<div class="t" style="left:309px;top:766px;font:12px/1 'Liberation Sans',sans-serif;color:#000;">Elektrické</div>
<div class="t" style="left:309px;top:780px;font:12px/1 'Liberation Sans',sans-serif;color:#000;">spotrebiče</div>
<div class="t" style="left:398px;top:773px;font:12px/1 'Liberation Sans',sans-serif;color:#000;">Ventilátor 01</div>
<div class="t" style="left:516px;top:773px;font:12px/1 'Liberation Sans',sans-serif;color:#000;">1</div>
<div class="t" style="left:539px;top:773px;font:12px/1 'Liberation Sans',sans-serif;color:#000;">-</div>
<div class="t" style="left:622px;top:773px;font:12px/1 'Liberation Sans',sans-serif;color:#000;">2025</div>
<div class="t" style="left:669px;top:773px;font:12px/1 'Liberation Sans',sans-serif;color:#000;">12.80</div>
<div class="t" style="left:746px;top:773px;font:12px/1 'Liberation Sans',sans-serif;color:#000;">12.80</div>
<div class="t" style="left:793px;top:773px;font:12px/1 'Liberation Sans',sans-serif;color:#000;">01. 12. 2025</div>
<div class="t" style="left:925px;top:773px;font:12px/1 'Liberation Sans',sans-serif;color:#000;">kúpa</div>
<div class="a" style="left:1055px;top:768px;width:22px;height:22px;border-radius:50%;background:radial-gradient(closest-side,rgba(160,160,160,.28),rgba(160,160,160,.12) 55%,rgba(160,160,160,0))"></div>
<div class="a" style="left:241px;top:799px;width:924px;height:38px;background:#d3d3fd"></div>
<div class="a" style="left:241px;top:837px;width:924px;height:1px;background:#d3e8fb"></div>
<div class="a" style="left:301px;top:799px;width:1px;height:39px;background:#d3e8fb"></div>
<div class="a" style="left:390px;top:799px;width:1px;height:39px;background:#d3e8fb"></div>
<div class="a" style="left:485px;top:799px;width:1px;height:39px;background:#d3e8fb"></div>
<div class="a" style="left:531px;top:799px;width:1px;height:39px;background:#d3e8fb"></div>
<div class="a" style="left:603px;top:799px;width:1px;height:39px;background:#d3e8fb"></div>
<div class="a" style="left:657px;top:799px;width:1px;height:39px;background:#d3e8fb"></div>
<div class="a" style="left:707px;top:799px;width:1px;height:39px;background:#d3e8fb"></div>
<div class="a" style="left:784px;top:799px;width:1px;height:39px;background:#d3e8fb"></div>
<div class="a" style="left:917px;top:799px;width:1px;height:39px;background:#d3e8fb"></div>
<div class="a" style="left:1056px;top:799px;width:1px;height:39px;background:#d3e8fb"></div>
<div class="t" style="left:248px;top:812px;font:12px/1 'Liberation Sans',sans-serif;color:#000;">251230</div>
<div class="t" style="left:309px;top:805px;font:12px/1 'Liberation Sans',sans-serif;color:#000;">Elektrické</div>
<div class="t" style="left:309px;top:819px;font:12px/1 'Liberation Sans',sans-serif;color:#000;">spotrebiče</div>
<div class="t" style="left:398px;top:812px;font:12px/1 'Liberation Sans',sans-serif;color:#000;">Prístroj 11</div>
<div class="t" style="left:516px;top:812px;font:12px/1 'Liberation Sans',sans-serif;color:#000;">1</div>
<div class="t" style="left:539px;top:812px;font:12px/1 'Liberation Sans',sans-serif;color:#000;">-</div>
<div class="t" style="left:622px;top:812px;font:12px/1 'Liberation Sans',sans-serif;color:#000;">2025</div>
<div class="t" style="left:669px;top:812px;font:12px/1 'Liberation Sans',sans-serif;color:#000;">12.80</div>
<div class="t" style="left:746px;top:812px;font:12px/1 'Liberation Sans',sans-serif;color:#000;">12.80</div>
<div class="t" style="left:793px;top:812px;font:12px/1 'Liberation Sans',sans-serif;color:#000;">01. 12. 2025</div>
<div class="t" style="left:925px;top:812px;font:12px/1 'Liberation Sans',sans-serif;color:#000;">dar</div>
<div class="a" style="left:1055px;top:807px;width:22px;height:22px;border-radius:50%;background:radial-gradient(closest-side,rgba(160,160,160,.28),rgba(160,160,160,.12) 55%,rgba(160,160,160,0))"></div>
<div class="a" style="left:1165px;top:214px;width:14px;height:621px;background:#fcfcfc"></div>
<svg class="a" style="left:1168px;top:219px" width="9" height="7" viewBox="0 0 9 7"><path d="M4.5 0 L9 7 L0 7Z" fill="#8a8a8a"/></svg>
<div class="a" style="left:1168px;top:232px;width:9px;height:309px;background:#8a8a8a;border-radius:4.5px"></div>
<svg class="a" style="left:1168px;top:823px" width="9" height="7" viewBox="0 0 9 7"><path d="M0 0 L9 0 L4.5 7Z" fill="#8a8a8a"/></svg>
<div class="a" style="left:241px;top:834px;width:938px;height:14px;background:#fcfcfc"></div>
<svg class="a" style="left:245px;top:837px" width="8" height="9" viewBox="0 0 8 9"><path d="M8 0 L8 9 L0 4.5Z" fill="#8a8a8a"/></svg>
<div class="a" style="left:259px;top:837px;width:873px;height:9px;background:#8a8a8a;border-radius:4.5px"></div>
<svg class="a" style="left:1153px;top:837px" width="8" height="9" viewBox="0 0 8 9"><path d="M0 0 L8 4.5 L0 9Z" fill="#8a8a8a"/></svg>
<div class="a" style="left:609px;top:330px;width:352px;height:109px;background:#fff;border:1px solid #d6d6d6;border-radius:3px;box-shadow:2px 3px 8px rgba(0,0,0,.35)"></div>
<div class="a" style="left:610px;top:330px;width:351px;height:25px;background:#45596a;border-radius:3px 3px 0 0"></div>
<div class="t" style="left:621px;top:337px;font:bold 12px/1 'Liberation Sans',sans-serif;color:#fff;">Edupage</div>
<svg class="a" style="left:942px;top:338px" width="12" height="12" viewBox="0 0 12 12"><path d="M2.3 2.3 L9.7 9.7 M9.7 2.3 L2.3 9.7" stroke="#fff" stroke-width="3"/></svg>
<div class="t" style="left:622px;top:362px;font:12px/1 'Liberation Sans',sans-serif;color:#3a3a3a;">Údaje boli uložené (15 položiek)</div>
<div class="a" style="left:610px;top:387px;width:351px;height:1px;background:#e2e2e2"></div>
<div class="a" style="left:910px;top:398px;width:37px;height:30px;background:#52a852;border-radius:3px"></div>
<div class="t" style="left:921px;top:408px;font:12px/1 'Liberation Sans',sans-serif;color:#fff;">Ok</div>
<div class="a" style="left:898px;top:388px;width:61px;height:50px;border:4px solid #ff0000"></div>
<div class="a" style="left:1px;top:43px;width:1178px;height:4px;background:linear-gradient(rgba(0,0,0,.22),rgba(0,0,0,0))"></div></body></html>
